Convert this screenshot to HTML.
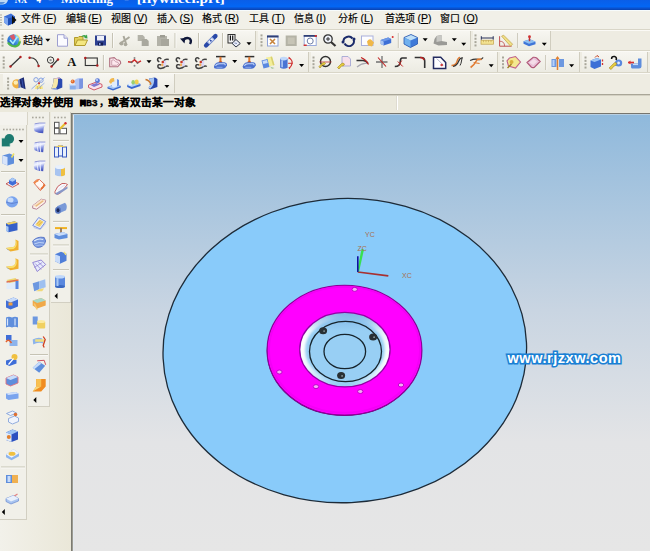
<!DOCTYPE html>
<html lang="zh-CN"><head><meta charset="utf-8"><style>
html,body{margin:0;padding:0;}
body{width:650px;height:551px;overflow:hidden;position:relative;background:#ece9d8;font-family:"Liberation Sans",sans-serif;}
</style></head><body>
<div style="position:absolute;left:0px;top:0px;width:650px;height:10px;background:linear-gradient(#0a5ee8 0%,#0366f4 65%,#0a50cc 85%,#0842b0 100%)"></div>
<div style="position:absolute;left:0px;top:10px;width:650px;height:1px;background:#f6fbfc"></div>
<svg style="position:absolute;left:0;top:0" width="650" height="10"><path d="M0,0 H8 Q7,4 3,4.5 L0,4.5Z" fill="#bcd8f4"/><path d="M0,2 H5 Q4,4 2,4 L0,4Z" fill="#5a90d8"/><text x="14.8" y="3.2" font-family="Liberation Serif" font-weight="bold" font-size="12.5" fill="#fff" textLength="12.2" lengthAdjust="spacingAndGlyphs">NX</text><text x="36.5" y="3.2" font-family="Liberation Serif" font-weight="bold" font-size="12.5" fill="#fff" textLength="4.5" lengthAdjust="spacingAndGlyphs">4</text><text x="48" y="3.2" font-family="Liberation Serif" font-weight="bold" font-size="12.5" fill="#fff" textLength="5" lengthAdjust="spacingAndGlyphs">-</text><text x="61" y="3.2" font-family="Liberation Serif" font-weight="bold" font-size="12.5" fill="#fff" textLength="52" lengthAdjust="spacingAndGlyphs">Modeling</text><text x="124" y="3.2" font-family="Liberation Serif" font-weight="bold" font-size="12.5" fill="#fff" textLength="5" lengthAdjust="spacingAndGlyphs">-</text><text x="136.8" y="3.2" font-family="Liberation Serif" font-weight="bold" font-size="12.5" fill="#fff" textLength="88" lengthAdjust="spacingAndGlyphs">[flywheel.prt]</text></svg>
<div style="position:absolute;left:0px;top:11px;width:650px;height:18px;background:#f1f0e8"></div>
<div style="position:absolute;left:0px;top:29px;width:650px;height:1px;background:#d9d6c8"></div>
<div style="position:absolute;left:0px;top:30px;width:650px;height:1px;background:#fbfaf6"></div>
<div style="position:absolute;left:20.5px;top:13px;white-space:nowrap;font:10px 'Liberation Sans',sans-serif;color:#000;line-height:11px;-webkit-text-stroke:0.15px #000">文件<span style="font-size:10.5px;margin-left:2.5px;letter-spacing:0px">(<u>F</u>)</span></div>
<div style="position:absolute;left:65.5px;top:13px;white-space:nowrap;font:10px 'Liberation Sans',sans-serif;color:#000;line-height:11px;-webkit-text-stroke:0.15px #000">编辑<span style="font-size:10.5px;margin-left:2.5px;letter-spacing:0px">(<u>E</u>)</span></div>
<div style="position:absolute;left:111px;top:13px;white-space:nowrap;font:10px 'Liberation Sans',sans-serif;color:#000;line-height:11px;-webkit-text-stroke:0.15px #000">视图<span style="font-size:10.5px;margin-left:2.5px;letter-spacing:0px">(<u>V</u>)</span></div>
<div style="position:absolute;left:157px;top:13px;white-space:nowrap;font:10px 'Liberation Sans',sans-serif;color:#000;line-height:11px;-webkit-text-stroke:0.15px #000">插入<span style="font-size:10.5px;margin-left:2.5px;letter-spacing:0px">(<u>S</u>)</span></div>
<div style="position:absolute;left:202px;top:13px;white-space:nowrap;font:10px 'Liberation Sans',sans-serif;color:#000;line-height:11px;-webkit-text-stroke:0.15px #000">格式<span style="font-size:10.5px;margin-left:2.5px;letter-spacing:0px">(<u>R</u>)</span></div>
<div style="position:absolute;left:249px;top:13px;white-space:nowrap;font:10px 'Liberation Sans',sans-serif;color:#000;line-height:11px;-webkit-text-stroke:0.15px #000">工具<span style="font-size:10.5px;margin-left:2.5px;letter-spacing:0px">(<u>T</u>)</span></div>
<div style="position:absolute;left:293.6px;top:13px;white-space:nowrap;font:10px 'Liberation Sans',sans-serif;color:#000;line-height:11px;-webkit-text-stroke:0.15px #000">信息<span style="font-size:10.5px;margin-left:2.5px;letter-spacing:0px">(<u>I</u>)</span></div>
<div style="position:absolute;left:338px;top:13px;white-space:nowrap;font:10px 'Liberation Sans',sans-serif;color:#000;line-height:11px;-webkit-text-stroke:0.15px #000">分析<span style="font-size:10.5px;margin-left:2.5px;letter-spacing:0px">(<u>L</u>)</span></div>
<div style="position:absolute;left:385px;top:13px;white-space:nowrap;font:10px 'Liberation Sans',sans-serif;color:#000;line-height:11px;-webkit-text-stroke:0.15px #000">首选项<span style="font-size:10.5px;margin-left:2.5px;letter-spacing:0px">(<u>P</u>)</span></div>
<div style="position:absolute;left:440.4px;top:13px;white-space:nowrap;font:10px 'Liberation Sans',sans-serif;color:#000;line-height:11px;-webkit-text-stroke:0.15px #000">窗口<span style="font-size:10.5px;margin-left:2.5px;letter-spacing:0px">(<u>O</u>)</span></div>
<div style="position:absolute;left:0px;top:31px;width:650px;height:19px;background:#eeece2"></div>
<div style="position:absolute;left:0px;top:50px;width:650px;height:1px;background:#d9d6c8"></div>
<div style="position:absolute;left:0px;top:51px;width:650px;height:1px;background:#fbfaf6"></div>
<div style="position:absolute;left:0px;top:52px;width:650px;height:20px;background:#eeece2"></div>
<div style="position:absolute;left:0px;top:72px;width:650px;height:1px;background:#d9d6c8"></div>
<div style="position:absolute;left:0px;top:73px;width:650px;height:1px;background:#fbfaf6"></div>
<div style="position:absolute;left:0px;top:74px;width:650px;height:20px;background:#eeece2"></div>
<div style="position:absolute;left:0px;top:94px;width:650px;height:1px;background:#a9a698"></div>
<div style="position:absolute;left:0px;top:95px;width:650px;height:1px;background:#d4d1c3"></div>
<div style="position:absolute;left:0px;top:31px;width:256px;height:19px;background:linear-gradient(#f7f6f1,#ecebe2);border-right:1px solid #d0cdbf;box-sizing:border-box"></div>
<div style="position:absolute;left:258px;top:31px;width:213px;height:19px;background:linear-gradient(#f7f6f1,#ecebe2);border-right:1px solid #d0cdbf;box-sizing:border-box"></div>
<div style="position:absolute;left:473px;top:31px;width:78px;height:19px;background:linear-gradient(#f7f6f1,#ecebe2);border-right:1px solid #d0cdbf;box-sizing:border-box"></div>
<div style="position:absolute;left:0px;top:52px;width:309px;height:20px;background:linear-gradient(#f7f6f1,#ecebe2);border-right:1px solid #d0cdbf;box-sizing:border-box"></div>
<div style="position:absolute;left:311px;top:52px;width:187px;height:20px;background:linear-gradient(#f7f6f1,#ecebe2);border-right:1px solid #d0cdbf;box-sizing:border-box"></div>
<div style="position:absolute;left:500px;top:52px;width:80px;height:20px;background:linear-gradient(#f7f6f1,#ecebe2);border-right:1px solid #d0cdbf;box-sizing:border-box"></div>
<div style="position:absolute;left:582px;top:52px;width:66px;height:20px;background:linear-gradient(#f7f6f1,#ecebe2);border-right:1px solid #d0cdbf;box-sizing:border-box"></div>
<div style="position:absolute;left:3px;top:74px;width:172px;height:19px;background:linear-gradient(#f7f6f1,#ecebe2);border-right:1px solid #d0cdbf;box-sizing:border-box"></div>
<div style="position:absolute;left:0px;top:96px;width:650px;height:17px;background:#ebe9dc"></div>
<div style="position:absolute;left:397px;top:96px;width:1px;height:14px;background:#ffffff"></div>
<div style="position:absolute;left:396px;top:96px;width:1px;height:14px;background:#dedbd0"></div>
<div style="position:absolute;left:0px;top:97px;white-space:nowrap;font:bold 10.4px 'Liberation Sans',sans-serif;color:#000;line-height:11px;letter-spacing:0.55px;-webkit-text-stroke:0.2px #000">选择对象并使用</div>
<div style="position:absolute;left:80px;top:97.5px;white-space:nowrap;font:bold 9.8px 'Liberation Mono',monospace;color:#000;line-height:11px;-webkit-text-stroke:0.35px #000"><span style='-webkit-text-stroke:1.2px #000'>M</span>B3</div>
<div style="position:absolute;left:98.5px;top:97px;white-space:nowrap;font:bold 10.4px 'Liberation Sans',sans-serif;color:#000;line-height:11px">，</div>
<div style="position:absolute;left:107.5px;top:97px;white-space:nowrap;font:bold 10.7px 'Liberation Sans',sans-serif;color:#000;line-height:11px;-webkit-text-stroke:0.2px #000">或者双击某一对象</div>
<div style="position:absolute;left:0px;top:112px;width:72px;height:439px;background:linear-gradient(90deg,#f2f1ea,#eae7d8)"></div>
<div style="position:absolute;left:0px;top:112px;width:28px;height:13px;background:#f4f3ee;border-right:1px solid #d8d5c8;box-sizing:border-box"></div>
<div style="position:absolute;left:0px;top:125px;width:27px;height:395px;background:#f1f0e9;border-right:1px solid #d2cfc2;border-bottom:1px solid #d2cfc2;box-sizing:border-box"></div>
<div style="position:absolute;left:28px;top:112px;width:22px;height:295px;background:#f1f0e9;border-right:1px solid #d2cfc2;border-bottom:1px solid #d2cfc2;box-sizing:border-box"></div>
<div style="position:absolute;left:51px;top:112px;width:20px;height:191px;background:#f1f0e9;border-right:1px solid #d2cfc2;border-bottom:1px solid #d2cfc2;box-sizing:border-box"></div>
<div style="position:absolute;left:71px;top:113px;width:1px;height:438px;background:#7c7b72"></div>
<div style="position:absolute;left:72px;top:113px;width:1px;height:438px;background:#9c9b92"></div>
<div style="position:absolute;left:73px;top:114px;width:1px;height:437px;background:#e4e9ee"></div>
<div style="position:absolute;left:74px;top:114px;width:576px;height:437px;background:linear-gradient(#8fb9dc 0%,#c9d5e2 45%,#e3e4e6 75%,#e6e6e6 100%)"></div>
<div style="position:absolute;left:71px;top:113px;width:579px;height:1px;background:#76756e"></div>
<div style="position:absolute;left:73px;top:114px;width:577px;height:1px;background:#b8cfe2"></div>
<svg style="position:absolute;left:0;top:0" width="650" height="551" viewBox="0 0 650 551"><defs><linearGradient id="shg" x1="0" y1="0" x2="0.3" y2="1"><stop offset="0" stop-color="#c4ccf6"/><stop offset="0.4" stop-color="#f2f4ff"/><stop offset="0.7" stop-color="#8a98e4"/><stop offset="1" stop-color="#4858c0"/></linearGradient></defs><defs><radialGradient id="hole" cx="0.5" cy="0.45" r="0.55"><stop offset="0" stop-color="#f2f9fd"/><stop offset="0.6" stop-color="#d4ecf8"/><stop offset="1" stop-color="#9fd0f2"/></radialGradient></defs><ellipse cx="344.8" cy="350.6" rx="181.85" ry="152.1" transform="rotate(-2.5 344.8 350.6)" fill="#89cbfa" stroke="#1d2b38" stroke-width="1.3"/><ellipse cx="344.3" cy="351.1" rx="77.6" ry="65" fill="#6a0078"/><ellipse cx="344.5" cy="350.2" rx="77.4" ry="64.9" fill="#ff00ff" stroke="#8a0098" stroke-width="1.2"/><ellipse cx="344.5" cy="349.8" rx="75.5" ry="63" fill="none" stroke="#f400f6" stroke-width="2"/><defs><clipPath id="hc"><ellipse cx="344.9" cy="349.6" rx="45.2" ry="37.2"/></clipPath><linearGradient id="sheen" x1="0" y1="0.45" x2="1" y2="0.55"><stop offset="0" stop-color="#ffffff" stop-opacity="1"/><stop offset="0.25" stop-color="#e8f6fc" stop-opacity="0.55"/><stop offset="0.45" stop-color="#c0e2f8" stop-opacity="0.05"/><stop offset="0.6" stop-color="#c0e2f8" stop-opacity="0.05"/><stop offset="0.8" stop-color="#e8f6fc" stop-opacity="0.6"/><stop offset="1" stop-color="#ffffff" stop-opacity="0.95"/></linearGradient><linearGradient id="topdark" x1="0" y1="0" x2="0" y2="1"><stop offset="0" stop-color="#6a9ed8" stop-opacity="0.55"/><stop offset="0.25" stop-color="#6a9ed8" stop-opacity="0"/></linearGradient><filter id="bl" x="-10%" y="-10%" width="120%" height="120%"><feGaussianBlur stdDeviation="1.3"/></filter></defs><ellipse cx="344.9" cy="349.6" rx="45.2" ry="37.2" fill="#98cff4"/><g clip-path="url(#hc)"><ellipse cx="344.9" cy="350" rx="43" ry="35" fill="none" stroke="url(#sheen)" stroke-width="6.5" filter="url(#bl)"/><rect x="299" y="312" width="92" height="76" fill="url(#topdark)"/></g><ellipse cx="344.9" cy="349.6" rx="45.2" ry="37.2" fill="none" stroke="#9400a4" stroke-width="1.3"/><ellipse cx="345.5" cy="351.5" rx="36" ry="30.2" fill="none" stroke="#16242c" stroke-width="1.3"/><ellipse cx="344.8" cy="351.5" rx="20.8" ry="17.2" fill="none" stroke="#16242c" stroke-width="1.3"/><ellipse cx="323.1" cy="330.8" rx="4" ry="3.5" fill="#283034"/><circle cx="324.1" cy="331.1" r="0.9" fill="#8a9aa0"/><ellipse cx="373.1" cy="336.9" rx="4" ry="3.5" fill="#283034"/><circle cx="374.1" cy="337.2" r="0.9" fill="#8a9aa0"/><ellipse cx="341.1" cy="375.6" rx="4" ry="3.5" fill="#283034"/><circle cx="342.1" cy="375.90000000000003" r="0.9" fill="#8a9aa0"/><ellipse cx="354.7" cy="289.4" rx="2.7" ry="2" fill="#f6a8f6" stroke="#b800c4" stroke-width="0.9"/><ellipse cx="279.4" cy="372" rx="2.7" ry="2" fill="#f6a8f6" stroke="#b800c4" stroke-width="0.9"/><ellipse cx="316" cy="386.6" rx="2.7" ry="2" fill="#f6a8f6" stroke="#b800c4" stroke-width="0.9"/><ellipse cx="360.3" cy="391.5" rx="2.7" ry="2" fill="#f6a8f6" stroke="#b800c4" stroke-width="0.9"/><ellipse cx="401" cy="385" rx="2.7" ry="2" fill="#f6a8f6" stroke="#b800c4" stroke-width="0.9"/><path d="M357.8,272 L388.3,275.9" stroke="#a83030" stroke-width="1.7"/><path d="M357,272 L361.5,249 L364,249.5 L359,272Z" fill="#38e050"/><path d="M357.8,272 L357.8,256.2" stroke="#1010a0" stroke-width="1.6"/><text x="365" y="237" font-family="Liberation Sans" font-size="7" fill="#a87050">YC</text><text x="357.5" y="250.5" font-family="Liberation Sans" font-size="7" fill="#a87050">ZC</text><text x="402" y="277.8" font-family="Liberation Sans" font-size="7" fill="#a87050">XC</text><path d="M0,15 h2 M0,17.5 h2 M0,20 h2 M0,22.5 h2 M0,25 h2" stroke="#b0ad9f" stroke-width="1"/><g transform="translate(3,13.5) scale(1)"><path d="M1,3 L8,0 L12,3 L12,9 L5,12 L1,9 Z" fill="#3b6fd8"/>
<path d="M1,3 L5,5 L5,12 L1,9Z" fill="#7aa4ee"/><path d="M5,5 L12,3 L12,9 L5,12Z" fill="#1d4fb8"/>
<path d="M9,2 L13.5,6.5 L9,11 Z" fill="#111"/></g><rect x="1.5" y="34.6" width="2" height="2" fill="#a8a69a"/><rect x="1.5" y="37.95" width="2" height="2" fill="#a8a69a"/><rect x="1.5" y="41.300000000000004" width="2" height="2" fill="#a8a69a"/><rect x="1.5" y="44.650000000000006" width="2" height="2" fill="#a8a69a"/><g transform="translate(7,33.5) scale(1)"><defs><linearGradient id="glb" x1="0" y1="1" x2="1" y2="0"><stop offset="0" stop-color="#1a48b0"/><stop offset="0.5" stop-color="#3a8ae0"/><stop offset="1" stop-color="#8ad8f4"/></linearGradient></defs>
<circle cx="6.5" cy="7" r="6.2" fill="url(#glb)"/>
<path d="M1,9 Q4,13.5 9,12.8 Q12.5,11.5 13,7.5" fill="none" stroke="#50b848" stroke-width="2.2"/>
<path d="M9.5,1.2 Q13.5,3.5 13,8" fill="none" stroke="#e8e080" stroke-width="1.3"/>
<path d="M2.5,2.5 L7,0.5 L8.5,5.5 L5.5,6.5Z" fill="#d85868"/>
<path d="M3,6.5 L6,10 L10.5,3" fill="none" stroke="#a8ecff" stroke-width="1.6"/></g><path d="M45.3,38.8 h5 l-2.5,3 z" fill="#000"/><g transform="translate(57,34.2) scale(1)"><path d="M0.5,0.5 H7 L10.5,4 V12 H0.5 Z" fill="#fbfbff" stroke="#9d9fd0" stroke-width="1"/>
<path d="M7,0.5 V4 H10.5" fill="#e6e6f6" stroke="#9d9fd0" stroke-width="1"/></g><g transform="translate(74,34) scale(1)"><path d="M0.5,3.5 H4 L5,2.5 H9 V11.5 H0.5 Z" fill="#e3cf5a" stroke="#b19b2e"/>
<path d="M1,11.5 L3.5,6 H13.5 L11,11.5 Z" fill="#f4e780" stroke="#b19b2e"/>
<path d="M7,3 Q9,0 12,1.5 L13,0.5 L13.5,4.5 L10,4 L11,3 Q9,2.2 7,3Z" fill="#3aa34a"/></g><g transform="translate(95,35.5) scale(1)"><rect x="0" y="0" width="11" height="10" fill="#2c3f90"/>
<rect x="2" y="0.5" width="7" height="4.5" fill="#eef0fa"/>
<rect x="3" y="7" width="5" height="3" fill="#101b50"/><rect x="4" y="7.5" width="1.5" height="2" fill="#8fa0e0"/></g><rect x="112.0" y="33" width="1" height="15" fill="#c6c3b4"/><rect x="113.0" y="33" width="1" height="15" fill="#fff" opacity="0.6"/><g transform="translate(118.5,35) scale(1)"><path d="M1,9 L11,2" stroke="#aaa89c" stroke-width="2"/><path d="M5,1 L8,10" stroke="#aaa89c" stroke-width="2"/>
<circle cx="3" cy="8.5" r="2" fill="#aaa89c"/><circle cx="7" cy="9.5" r="1.8" fill="#aaa89c"/></g><g transform="translate(137.7,35) scale(1)"><path d="M0,0 H5 L7,2 V6 H0Z" fill="#b3b2a8"/><path d="M4,4 H9 L11,6 V11 H4Z" fill="#a9a89e"/></g><g transform="translate(157,35) scale(1)"><rect x="0" y="1" width="10" height="10" fill="#b3b2a8"/><rect x="3" y="0" width="5" height="2.5" fill="#9d9c92"/><rect x="4" y="4" width="8" height="7" fill="#a7a69c"/></g><rect x="174.5" y="33" width="1" height="15" fill="#c6c3b4"/><rect x="175.5" y="33" width="1" height="15" fill="#fff" opacity="0.6"/><g transform="translate(180,36) scale(1)"><path d="M3,4 Q6,1 9.5,2.5 Q12,4.5 10,8" fill="none" stroke="#10183a" stroke-width="2.4"/>
<path d="M0,2.5 L4.5,7.5 L5.5,2 Z" fill="#10183a"/></g><rect x="198.0" y="33" width="1" height="15" fill="#c6c3b4"/><rect x="199.0" y="33" width="1" height="15" fill="#fff" opacity="0.6"/><g transform="translate(204,34) scale(1)"><path d="M2,11.5 L11.5,2" stroke="#2848a8" stroke-width="4.2" stroke-linecap="round"/>
<path d="M4.2,9.3 L9.3,4.2" stroke="#b8c8ec" stroke-width="3.6"/>
<path d="M5.2,8.3 L6.3,7.2 M7.3,6.2 L8.3,5.2" stroke="#ffffff" stroke-width="1.6"/>
<circle cx="6.8" cy="6.7" r="0.9" fill="#2848a8"/></g><rect x="222.0" y="33" width="1" height="15" fill="#c6c3b4"/><rect x="223.0" y="33" width="1" height="15" fill="#fff" opacity="0.6"/><g transform="translate(227.5,34) scale(1)"><rect x="0.5" y="0.5" width="7" height="8.5" fill="#f4f4f4" stroke="#303030" stroke-width="1"/>
<rect x="2.3" y="1.5" width="1.2" height="5" fill="#111"/><rect x="4.6" y="1.5" width="1.2" height="5" fill="#111"/>
<path d="M8.5,5.5 L12.8,9.5 L8.5,13 L4.5,9.3 Z" fill="#e8ecf8" stroke="#303848" stroke-width="1"/><path d="M7,9 L9.5,9.5" stroke="#6a7aa8" stroke-width="0.8"/></g><path d="M246.5,42.3 h5 l-2.5,3 z" fill="#000"/><rect x="260.5" y="34.4" width="2" height="2" fill="#a8a69a"/><rect x="260.5" y="37.75" width="2" height="2" fill="#a8a69a"/><rect x="260.5" y="41.1" width="2" height="2" fill="#a8a69a"/><rect x="260.5" y="44.45" width="2" height="2" fill="#a8a69a"/><g transform="translate(267,35.5) scale(1)"><rect x="0.5" y="0.5" width="10.5" height="10" fill="#fff" stroke="#8fa3d8"/>
<rect x="0" y="0" width="11.5" height="2" fill="#2e3f76"/>
<path d="M3,3.5 L8,8.5 M8,3.5 L3,8.5" stroke="#c8843c" stroke-width="1.6"/></g><g transform="translate(285.7,35.5) scale(1)"><rect x="0" y="0" width="11" height="10.5" fill="#b4b3a6"/><rect x="2" y="2" width="7" height="6.5" fill="#c6c4b6"/></g><g transform="translate(303.7,35) scale(1)"><rect x="0.5" y="0.5" width="12" height="10" fill="#fff" stroke="#98aadc"/>
<rect x="0" y="0" width="13" height="1.8" fill="#2e3f76"/>
<circle cx="6.5" cy="6" r="3" fill="none" stroke="#6e7ea8" stroke-width="1"/>
<rect x="0" y="9.5" width="3" height="1.5" fill="#d03030"/><rect x="11" y="0" width="2" height="2" fill="#d03030"/></g><g transform="translate(323,34) scale(1)"><circle cx="5" cy="5" r="4.2" fill="#eef2fa" stroke="#333" stroke-width="1.3"/>
<path d="M3,5 H7 M5,3 V7" stroke="#333" stroke-width="1"/><path d="M8,8 L12.5,12" stroke="#333" stroke-width="2.2"/></g><g transform="translate(341.5,35.5) scale(1)"><path d="M2,6 A5,4.5 0 0 1 11,3" fill="none" stroke="#1a2a6a" stroke-width="2"/>
<path d="M12,4 A5,4.5 0 0 1 3,8" fill="none" stroke="#1a2a6a" stroke-width="2"/>
<circle cx="1.5" cy="6.5" r="1.5" fill="#1a2a6a"/><circle cx="12.5" cy="3.5" r="1.5" fill="#1a2a6a"/></g><g transform="translate(361,35.5) scale(1)"><rect x="0.5" y="0.5" width="11.5" height="9.5" fill="#fdfdff" stroke="#a9b0dc"/>
<path d="M6,6 Q8,3 10,4 L13,7 L11,11 L7,10 Z" fill="#f0b848"/></g><g transform="translate(380.2,36) scale(1)"><path d="M0.5,4 L8,1.5 L11,3 L11,7 L3.5,9.5 L0.5,8 Z" fill="#3d6fd6"/>
<path d="M0.5,4 L3.5,5.5 L3.5,9.5 L0.5,8Z" fill="#a8c4f2"/><path d="M0.5,4 L8,1.5 L11,3 L3.5,5.5Z" fill="#6e98e6"/>
<circle cx="12.5" cy="1" r="1" fill="#d83030"/></g><rect x="397.8" y="33" width="1" height="15" fill="#c6c3b4"/><rect x="398.8" y="33" width="1" height="15" fill="#fff" opacity="0.6"/><g transform="translate(403,34) scale(1)"><path d="M1,3.5 L8,0.5 L14.5,3.5 L14.5,10 L7.5,13.5 L1,10 Z" fill="#3f7ad8"/>
<path d="M1,3.5 L8,0.5 L14.5,3.5 L7.5,6.5Z" fill="#bfe0f8"/><path d="M1,3.5 L7.5,6.5 L7.5,13.5 L1,10Z" fill="#6fb0ee"/>
<path d="M1,3.5 L8,0.5 L14.5,3.5 L14.5,10 L7.5,13.5 L1,10 Z" fill="none" stroke="#2a58b0" stroke-width="0.8"/></g><path d="M422.7,38.3 h5 l-2.5,3 z" fill="#000"/><g transform="translate(433.5,35) scale(1)"><path d="M3,1 L8,0 L8,6 L13.5,7 L13.5,10 L5,10.5 L0,8.5 L1,4 Z" fill="#9a9a96"/>
<path d="M3,1 L8,0 L8,6 L3,7Z" fill="#c8c8c4"/></g><path d="M451.8,38.3 h5 l-2.5,3 z" fill="#000"/><path d="M461.2,42.8 h5 l-2.5,3 z" fill="#000"/><rect x="474.5" y="34.4" width="2" height="2" fill="#a8a69a"/><rect x="474.5" y="37.75" width="2" height="2" fill="#a8a69a"/><rect x="474.5" y="41.1" width="2" height="2" fill="#a8a69a"/><rect x="474.5" y="44.45" width="2" height="2" fill="#a8a69a"/><g transform="translate(480.5,36.2) scale(1)"><rect x="0.5" y="4" width="12.5" height="4" fill="#f4e494" stroke="#c0a048" stroke-width="0.7"/>
<path d="M0.8,0 V3.5 M12.7,0 V3.5 M0.8,1.8 H12.7" stroke="#283058" stroke-width="1"/><path d="M3,4 V6 M5.5,4 V6 M8,4 V6 M10.5,4 V6" stroke="#c0a048" stroke-width="0.6"/></g><g transform="translate(498.6,35.2) scale(1)"><path d="M1,11 V1 M1,11 H13" stroke="#c05050" stroke-width="1"/><path d="M1,6 Q6,6 6,11" fill="none" stroke="#c05050" stroke-width="0.8"/>
<path d="M3,1 L5,0 L14,9 L12,11 Z" fill="#f0e088" stroke="#c0a040" stroke-width="0.7"/></g><rect x="517.2" y="33" width="1" height="15" fill="#c6c3b4"/><rect x="518.2" y="33" width="1" height="15" fill="#fff" opacity="0.6"/><g transform="translate(523,35.2) scale(1)"><path d="M0.5,6 L7,4 L12.5,6.5 L12.5,9 L6,11 L0.5,8.5Z" fill="#3f75d8"/>
<path d="M0.5,6 L7,4 L12.5,6.5 L6,8.5Z" fill="#8fbff0"/>
<path d="M6.5,6 V1.5" stroke="#c03030" stroke-width="1.4"/><circle cx="6.5" cy="1.5" r="1.4" fill="#d03030"/></g><path d="M541.8,42.8 h5 l-2.5,3 z" fill="#000"/><rect x="2.7" y="56.5" width="2" height="2" fill="#a8a69a"/><rect x="2.7" y="59.85" width="2" height="2" fill="#a8a69a"/><rect x="2.7" y="63.2" width="2" height="2" fill="#a8a69a"/><rect x="2.7" y="66.55" width="2" height="2" fill="#a8a69a"/><g transform="translate(9.5,56.5) scale(1)"><path d="M1,10 L11,0.5" stroke="#333" stroke-width="1.2"/><circle cx="1" cy="10" r="1.2" fill="#b02020"/><circle cx="11" cy="0.5" r="1.2" fill="#b02020"/></g><g transform="translate(28.8,57) scale(1)"><path d="M0.5,0.8 Q8,0 9.8,9" fill="none" stroke="#333" stroke-width="1.2"/><circle cx="0.8" cy="0.8" r="1.2" fill="#b02020"/><circle cx="9.8" cy="9" r="1.2" fill="#b02020"/></g><g transform="translate(47,56.5) scale(1)"><circle cx="3.6" cy="3.6" r="3.2" fill="none" stroke="#333" stroke-width="1"/><circle cx="3.6" cy="3.6" r="1.2" fill="#999"/>
<path d="M4.5,10 L11,3" stroke="#333" stroke-width="1.2"/><circle cx="4.5" cy="10" r="1.2" fill="#b02020"/><circle cx="11" cy="3" r="1.2" fill="#b02020"/></g><text x="71.7" y="66" text-anchor="middle" font-family="Liberation Serif" font-weight="bold" font-size="12.5" fill="#111">A</text><g transform="translate(84.5,57) scale(1)"><rect x="0.8" y="1" width="12" height="7.5" fill="none" stroke="#333" stroke-width="1.1"/><circle cx="0.8" cy="1" r="1.2" fill="#b02020"/><circle cx="12.8" cy="8.5" r="1.2" fill="#b02020"/></g><rect x="102.9" y="55" width="1" height="15" fill="#c6c3b4"/><rect x="103.9" y="55" width="1" height="15" fill="#fff" opacity="0.6"/><g transform="translate(108.7,56.8) scale(1)"><path d="M1,1.5 L5.5,0.8 L8,3 Q12,3 12,6.5 L9,10 H1 Z" fill="#fde8ee" stroke="#b07080" stroke-width="1.1"/>
<path d="M3,3.5 L5,3 L7,5 Q10,5 10,7 L8,8.5 H3 Z" fill="none" stroke="#c090a0" stroke-width="0.8"/></g><g transform="translate(127.5,56.8) scale(1)"><path d="M0.5,5 L4,5.5 L7,3 L10,6 L13.5,4" fill="none" stroke="#d02828" stroke-width="1.5"/>
<circle cx="7" cy="1.2" r="1" fill="#888"/><circle cx="7" cy="9" r="1" fill="#888"/><circle cx="4" cy="5.5" r="1" fill="#666"/><circle cx="10" cy="6" r="1" fill="#666"/></g><path d="M146.5,60.3 h5 l-2.5,3 z" fill="#000"/><g transform="translate(156.3,56.5) scale(1)"><path d="M5,2.5 Q3,0.5 1.5,2 Q0.5,4 3,5.5" fill="none" stroke="#404040" stroke-width="1.4"/><path d="M7.5,4.5 Q9,2 12.5,3" fill="none" stroke="#404040" stroke-width="1.4"/>
<path d="M5,8.5 Q2,7.5 1.5,9.5 Q1.5,12 4.5,12 Q8,11.5 9,10 Q11,9 12.5,10" fill="none" stroke="#404040" stroke-width="1.4"/>
<path d="M7,4 L10,4.5 L9.5,10 L6,9.5Z" fill="#dcd8f8"/><circle cx="6.5" cy="5.5" r="1.3" fill="#c83828"/><ellipse cx="6" cy="8.3" rx="1.2" ry="1.6" fill="#f0b060"/></g><g transform="translate(175,56.5) scale(1)"><path d="M5,2.5 Q3,0.5 1.5,2 Q0.5,4 3,5.5" fill="none" stroke="#404040" stroke-width="1.4"/><path d="M7.5,4.5 Q9,2 12.5,3" fill="none" stroke="#404040" stroke-width="1.4"/>
<path d="M5,8.5 Q2,7.5 1.5,9.5 Q1.5,12 4.5,12 Q8,11.5 9,10 Q11,9 12.5,10" fill="none" stroke="#404040" stroke-width="1.4"/>
<path d="M7,4 L10,4.5 L9.5,10 L6,9.5Z" fill="#dcd8f8"/><circle cx="6.5" cy="5.5" r="1.3" fill="#c83828"/><ellipse cx="6" cy="8.3" rx="1.2" ry="1.6" fill="#f0b060"/></g><g transform="translate(194.3,56.5) scale(1)"><path d="M5,2.5 Q3,0.5 1.5,2 Q0.5,4 3,5.5" fill="none" stroke="#404040" stroke-width="1.4"/><path d="M7.5,4.5 Q9,2 12.5,3" fill="none" stroke="#404040" stroke-width="1.4"/>
<path d="M5,8.5 Q2,7.5 1.5,9.5 Q1.5,12 4.5,12 Q8,11.5 9,10 Q11,9 12.5,10" fill="none" stroke="#404040" stroke-width="1.4"/>
<path d="M7,4 L10,4.5 L9.5,10 L6,9.5Z" fill="#dcd8f8"/><circle cx="6.5" cy="5.5" r="1.3" fill="#c83828"/><ellipse cx="6" cy="8.3" rx="1.2" ry="1.6" fill="#f0b060"/></g><g transform="translate(213.5,55.8) scale(1)"><path d="M2.5,0.8 H12" stroke="#303030" stroke-width="1.5"/><path d="M7,1 V6.5" stroke="#e07830" stroke-width="2"/><ellipse cx="7" cy="6.5" rx="2" ry="1" fill="#c05020"/>
<path d="M0.5,10.5 Q2,6.5 5,6.5 H11 Q13.8,7 13.5,9.5 Q12,13 9,13 H3 Q0,13 0.5,10.5Z" fill="#4a70d0"/><path d="M2,10 Q3,8 6,8 H11 Q12,8.5 11.5,9.5" fill="none" stroke="#c8daf8" stroke-width="1.1"/><path d="M3,11.5 H9" stroke="#98b4ec" stroke-width="0.8"/></g><path d="M232.2,60.099999999999994 h5 l-2.5,3 z" fill="#000"/><g transform="translate(242.3,55.8) scale(1)"><path d="M2.5,0.8 H12" stroke="#303030" stroke-width="1.5"/><path d="M7,1 V6.5" stroke="#e07830" stroke-width="2"/><ellipse cx="7" cy="6.5" rx="2" ry="1" fill="#c05020"/>
<path d="M0.5,10.5 Q2,6.5 5,6.5 H11 Q13.8,7 13.5,9.5 Q12,13 9,13 H3 Q0,13 0.5,10.5Z" fill="#4a70d0"/><path d="M2,10 Q3,8 6,8 H11 Q12,8.5 11.5,9.5" fill="none" stroke="#c8daf8" stroke-width="1.1"/><path d="M3,11.5 H9" stroke="#98b4ec" stroke-width="0.8"/></g><g transform="translate(261,56) scale(1)"><path d="M5,1.5 L11,0.5 L13.5,9 L7.5,10.5Z" fill="#f4ee98"/><path d="M11,0.5 L13.5,9 L12,9.5 L9.5,1Z" fill="#d8d070"/><path d="M0.5,4.5 L6.5,3 L8.5,11 L2.5,12.5Z" fill="#5a88e0"/><path d="M1.5,5 L6,4 L6.8,7 L2.3,8Z" fill="#c8dcfa"/><path d="M9,10.5 L13.5,12 L11,13Z" fill="#a8c8a0"/></g><g transform="translate(279.6,55.8) scale(1)"><path d="M0.5,3 Q4,1 8,3 V12 Q4,14 0.5,12Z" fill="#4a74d4"/><ellipse cx="4.2" cy="2.8" rx="3.7" ry="1.8" fill="#c0d8fa"/><path d="M2.5,4.5 V11.5" stroke="#b8d0f8" stroke-width="1.5"/>
<path d="M9.5,2 Q13,4.5 12.5,7.5 Q12,10.5 9.5,12.5" fill="none" stroke="#d03030" stroke-width="1.2"/><path d="M8.5,7.5 H13" stroke="#d03030" stroke-width="1"/><path d="M9,1 L11,2.5 L9,3.5Z M9,11.5 L11,12 L9.5,13.5Z" fill="#d03030"/></g><path d="M299.1,64.0 h5 l-2.5,3 z" fill="#000"/><rect x="312.5" y="56.5" width="2" height="2" fill="#a8a69a"/><rect x="312.5" y="59.85" width="2" height="2" fill="#a8a69a"/><rect x="312.5" y="63.2" width="2" height="2" fill="#a8a69a"/><rect x="312.5" y="66.55" width="2" height="2" fill="#a8a69a"/><g transform="translate(318.5,56) scale(1)"><circle cx="7" cy="5.5" r="5" fill="none" stroke="#303030" stroke-width="1.4"/><path d="M1,6 H13" stroke="#c03030" stroke-width="0.8"/>
<path d="M0.5,10.5 L4,7 Q6,5.5 7,7.5 Q6,9.5 4,9 L1.5,12Z" fill="#e8d040" stroke="#a08020" stroke-width="0.6"/></g><g transform="translate(337,56) scale(1)"><path d="M5,0.5 H11 L13.5,3 V10 H5Z" fill="#f8e0ec" stroke="#9aa0d0" stroke-width="0.8"/>
<path d="M0.5,11.5 L4,8 Q6,6 7.5,8 Q7,10.5 4.5,10 L2,13Z" fill="#e8d040" stroke="#a08020" stroke-width="0.6"/></g><g transform="translate(356,56.5) scale(1)"><path d="M0.5,4 H7 Q10,4 12,7" fill="none" stroke="#333" stroke-width="1.5"/><path d="M5,1 Q10,3 12.5,8" fill="none" stroke="#c02020" stroke-width="1.2"/><path d="M1,10.5 Q6,6 11,7" fill="none" stroke="#a8a8b0" stroke-width="1.2"/></g><g transform="translate(376,56) scale(1)"><path d="M0,6 H11.5 M6,0 V12" stroke="#707070" stroke-width="1.3"/><path d="M2,1.5 L10,10.5" stroke="#c02020" stroke-width="1.1"/></g><g transform="translate(393.8,56.5) scale(1)"><path d="M13,1.5 H8.5 Q6.5,1.5 6.5,5 Q6.5,10 1,10" fill="none" stroke="#333" stroke-width="1.6"/><path d="M4,5 L9,10" stroke="#c02020" stroke-width="1"/><path d="M5,9 L8,4" stroke="#c02020" stroke-width="0.8"/></g><g transform="translate(414.2,56) scale(1)"><path d="M0.5,1.5 H7 Q10.5,1.5 10.5,5 V12" fill="none" stroke="#333" stroke-width="1.6"/><path d="M6,1.5 Q9,1.5 10,4" fill="none" stroke="#c02020" stroke-width="1.4"/></g><g transform="translate(432.7,56.5) scale(1)"><path d="M0.8,0.8 H8 L13,6 V12 H0.8Z" fill="#fff" stroke="#242c60" stroke-width="1.5"/><path d="M4,2 L11,9" stroke="#9ca0c0" stroke-width="0.8"/><circle cx="9" cy="8.5" r="1.3" fill="#d04040"/></g><g transform="translate(451,56.5) scale(1)"><path d="M0.5,9 Q5,9 6,5 Q7,1 9,1" fill="none" stroke="#e07a30" stroke-width="1.4"/><path d="M2,10 Q6,9 7.5,5 Q9,1 12,1.5" fill="none" stroke="#333" stroke-width="1.2"/><path d="M11,2 Q10,8 9,9" fill="none" stroke="#333" stroke-width="1"/></g><g transform="translate(469.6,56.5) scale(1)"><path d="M0.5,4 Q5,2 9,3 Q12,3.5 13.5,1" fill="none" stroke="#333" stroke-width="1.3"/><path d="M1,11 Q5,8 7,4 Q8,2 12,3" fill="none" stroke="#e07a30" stroke-width="1.6"/><path d="M4,6 L10,7" stroke="#e07a30" stroke-width="1.2"/></g><path d="M488.7,64.3 h5 l-2.5,3 z" fill="#000"/><rect x="502.0" y="56.5" width="2" height="2" fill="#a8a69a"/><rect x="502.0" y="59.85" width="2" height="2" fill="#a8a69a"/><rect x="502.0" y="63.2" width="2" height="2" fill="#a8a69a"/><rect x="502.0" y="66.55" width="2" height="2" fill="#a8a69a"/><g transform="translate(506.5,56) scale(1)"><path d="M3,2 L9,0.5 L14,6 L9,12 L2,10 L0.5,5Z" fill="#f4e890" stroke="#c06088" stroke-width="1.1"/><circle cx="5" cy="6" r="2" fill="#d8b040"/><path d="M1,12 L5,8" stroke="#a08020" stroke-width="1.5"/></g><g transform="translate(526.2,56.5) scale(1)"><path d="M0.8,6 L7,0.8 Q9,0.5 10.5,1.5 L14,5 L8,11 Q6,11.5 5,10.5Z" fill="#e8c0d8" stroke="#b05878" stroke-width="1.1"/><path d="M3,6 L7.5,2.5 L11,5 L7,8.5Z" fill="#f4dce8"/></g><rect x="545.2" y="55" width="1" height="15" fill="#c6c3b4"/><rect x="546.2" y="55" width="1" height="15" fill="#fff" opacity="0.6"/><g transform="translate(551,56) scale(1)"><rect x="0.5" y="3" width="5" height="8" fill="#6d98e0"/><rect x="8" y="3" width="5" height="8" fill="#6d98e0"/><rect x="1.5" y="4" width="2" height="6" fill="#b8d0f8"/>
<path d="M6.5,14 V1" stroke="#e08030" stroke-width="1.5"/><path d="M4.5,3 L6.5,0 L8.5,3Z" fill="#e08030"/></g><path d="M569.1,64.3 h5 l-2.5,3 z" fill="#000"/><rect x="584.5" y="56.5" width="2" height="2" fill="#a8a69a"/><rect x="584.5" y="59.85" width="2" height="2" fill="#a8a69a"/><rect x="584.5" y="63.2" width="2" height="2" fill="#a8a69a"/><rect x="584.5" y="66.55" width="2" height="2" fill="#a8a69a"/><g transform="translate(590,55.5) scale(1)"><path d="M0.5,5 L7,2.5 L11,4 L11,11 L4.5,13.5 L0.5,11.5Z" fill="#3d70d6"/><path d="M0.5,5 L7,2.5 L11,4 L4.5,6.5Z" fill="#9ec6f4"/>
<path d="M5,2 L7,0 L9,1.5" stroke="#c04020" stroke-width="1" fill="none"/><path d="M12.5,4 V10" stroke="#d03030" stroke-width="1.3" stroke-dasharray="2,1.5"/></g><g transform="translate(608.6,56) scale(1)"><circle cx="10" cy="7" r="3.6" fill="#5a88de"/><circle cx="10" cy="7" r="1.4" fill="#e0ecff"/>
<path d="M3,3 Q3,0 6,0.5 Q8.5,1.2 7.5,4" fill="none" stroke="#111" stroke-width="1.6"/>
<path d="M0.5,12 L4.5,8 Q6,5.5 8,7 Q8,10 5.5,10 L2.5,13.5Z" fill="#e8d040" stroke="#a08020" stroke-width="0.6"/></g><g transform="translate(628,56.5) scale(1)"><path d="M3,7 H10 V2 H13.5 V10 Q13.5,12 11,12 H4 Q3,12 3,10Z" fill="#5f8ddc"/><path d="M5,8 H10" stroke="#c8dcfa" stroke-width="1.2"/>
<path d="M0,6 H6" stroke="#d83030" stroke-width="1.6"/><path d="M0,6 L2.5,4 V8Z" fill="#d83030"/></g><rect x="7.1" y="77.5" width="2" height="2" fill="#a8a69a"/><rect x="7.1" y="80.85" width="2" height="2" fill="#a8a69a"/><rect x="7.1" y="84.2" width="2" height="2" fill="#a8a69a"/><rect x="7.1" y="87.55" width="2" height="2" fill="#a8a69a"/><g transform="translate(11.8,76.8) scale(1)"><circle cx="5" cy="7" r="4.6" fill="#f0b040"/><circle cx="4" cy="5.8" r="2.2" fill="#fcecb0"/>
<path d="M7.5,2.5 Q10,1.5 12,0.5 L13.8,12.5 L9,10.5 Q8,6 7.5,2.5Z" fill="#1c2a70"/><path d="M7.5,2.5 L9,10.5 L6.5,11.5 Q7,6 6,4Z" fill="#6a88d8"/><path d="M10,2 L11.5,11" stroke="#4060c0" stroke-width="0.8"/></g><g transform="translate(31,77) scale(1)"><path d="M0.5,12 L13.5,0.5" stroke="#8aa8e8" stroke-width="0.9"/><circle cx="5" cy="2.8" r="2.2" fill="none" stroke="#7a98e0" stroke-width="0.9"/><circle cx="10" cy="3.2" r="2.2" fill="none" stroke="#7a98e0" stroke-width="0.9"/>
<path d="M4,12 L5,7.5 L6.5,9 L8,6 L9.5,9 L11,7.5 L12,12Z" fill="#f4e486"/><path d="M6.5,9 V12 M9.5,9 V12" stroke="#d8b850" stroke-width="0.7"/><circle cx="8" cy="6.2" r="1" fill="#c83030"/><path d="M6,12.5 L13.5,6" stroke="#8aa8e8" stroke-width="0.8"/></g><g transform="translate(50.5,77) scale(1)"><path d="M3,1.5 L9,0.5 L11.8,2.5 L11.8,10.5 L7,12.5 L0.5,12 Q3,8 3,1.5Z" fill="#2848b0"/>
<path d="M3,1.5 L7.5,1 Q8,8 5.5,11 L0.5,12 Q3,8 3,1.5Z" fill="#f6e8a8"/><path d="M3,1.5 L9,0.5 L10,1.5 L7.5,1.8Z" fill="#e0b0d0"/><path d="M0.5,12 L5.5,11 L7,12.5Z" fill="#98b0e8"/></g><g transform="translate(69.2,77) scale(1)"><path d="M5.5,3 Q9,0 13.8,1.5 V11 Q9,13 5.5,12Z" fill="#b0c4f4"/><path d="M10,2 Q12.5,1.5 13.8,1.5 V11 Q12,12 10,12Z" fill="#7a94e0"/>
<rect x="0.5" y="7" width="6" height="5.5" fill="#8aaeea"/><rect x="0.5" y="7" width="6" height="1.5" fill="#d8e4fa"/><circle cx="3.5" cy="4.5" r="2" fill="#e06830"/><circle cx="3" cy="4" r="0.8" fill="#f8c080"/></g><g transform="translate(88,77.5) scale(1)"><path d="M0.5,7.5 L8.5,4.5 L14,7 L14,9.5 L6,12.5 L0.5,10Z" fill="#f8e4ec" stroke="#d05868" stroke-width="1"/><path d="M2.5,7.5 L8.5,5.5 L12,7 L6,9.5Z" fill="#8078d0"/><circle cx="9.5" cy="3.2" r="2.4" fill="#5a78d8"/><circle cx="9" cy="2.6" r="1" fill="#c8d8fa"/></g><g transform="translate(107,77) scale(1)"><path d="M0.5,10 L8.5,7 L13.8,9 L13.8,10.5 L6,13.5 L0.5,11.5Z" fill="#3a68d0"/><path d="M0.5,10 L8.5,7 L13.8,9 L6,12Z" fill="#a8c8f4"/>
<path d="M5,4 L10,2 L12,3 V8.5 L7,10.5 L5,9.5Z" fill="#e0ecfc"/><path d="M10,2 L12,3 V8.5 L10,9.5Z" fill="#6a90e0"/><path d="M2,5 Q3,0.5 7,1 L7.5,4.5 Q5,4 4,7Z" fill="#f0b850"/></g><g transform="translate(126.7,79.5) scale(1)"><path d="M0.5,5.5 L9,2.5 L13.8,4.5 L13.8,6.5 L5,9.5 L0.5,7.5Z" fill="#3a68d0"/><path d="M0.5,5.5 L9,2.5 L13.8,4.5 L5,7.5Z" fill="#b0d4f4"/><ellipse cx="3.5" cy="4" rx="2" ry="2.2" fill="#e8f0fc"/><ellipse cx="6.5" cy="2.8" rx="1.8" ry="2.3" fill="#9ad070"/><ellipse cx="10" cy="2.5" rx="2" ry="2.4" fill="#f0d050"/></g><g transform="translate(145,77) scale(1)"><path d="M4,1.5 L10,0.5 L12.4,2 L12.4,10 L5,12.5 L3.5,11 Q7,7 4,1.5Z" fill="#2848b0"/><path d="M4,1.5 L9,1 Q10,7 5.5,11.5 L3.5,11 Q7,7 4,1.5Z" fill="#a8c8f4"/><path d="M0.5,2.5 Q4,3 6,7" fill="none" stroke="#c87830" stroke-width="1.6"/><path d="M5,6 L6.5,7.5 L4.5,8Z" fill="#c87830"/></g><path d="M164.4,85.1 h5 l-2.5,3 z" fill="#000"/><rect x="3.0" y="128.7" width="1.6" height="1.6" fill="#a9a79c"/><rect x="6.2" y="128.7" width="1.6" height="1.6" fill="#a9a79c"/><rect x="9.4" y="128.7" width="1.6" height="1.6" fill="#a9a79c"/><rect x="12.600000000000001" y="128.7" width="1.6" height="1.6" fill="#a9a79c"/><rect x="15.8" y="128.7" width="1.6" height="1.6" fill="#a9a79c"/><rect x="19.0" y="128.7" width="1.6" height="1.6" fill="#a9a79c"/><rect x="22.200000000000003" y="128.7" width="1.6" height="1.6" fill="#a9a79c"/><g transform="translate(1.3,133.4) scale(1)"><circle cx="8" cy="5.5" r="4.8" fill="#1d7a70"/><rect x="0.5" y="5" width="8" height="8" fill="#1d7a70"/><path d="M0.5,5 H3 M8.5,10 V13" stroke="#5ab0a0" stroke-width="0.6"/></g><path d="M18.5,140.10000000000002 h5 l-2.5,3 z" fill="#000"/><g transform="translate(1.5,152.5) scale(1)"><path d="M1,3 L8,1 L12.5,3 V11 L6,13 L1,11Z" fill="#5f8edc"/><path d="M1,3 L6,4.5 V13 L1,11Z" fill="#d8e4fa"/><path d="M12.5,1 L10,5" stroke="#f0e060" stroke-width="1.5"/></g><path d="M18.5,159.10000000000002 h5 l-2.5,3 z" fill="#000"/><rect x="1" y="171.0" width="24" height="1" fill="#c6c3b4"/><rect x="1" y="172.0" width="24" height="1" fill="#fff" opacity="0.6"/><g transform="translate(5.5,176.8) scale(1)"><path d="M0.5,7 L6.5,4 L13.5,7 L7,10.5Z" fill="#f6f0f0" stroke="#c05050" stroke-width="0.9"/><path d="M3.5,3.5 L7,1 L10.5,3 V7 L7,9 L3.5,7Z" fill="#3f6ed8"/><path d="M3.5,3.5 L7,1 L10.5,3 L7,5Z" fill="#a8c8f4"/></g><g transform="translate(5.5,196.1) scale(1)"><ellipse cx="6.5" cy="5.8" rx="6" ry="5.6" fill="#7aa4ee"/><ellipse cx="5" cy="4" rx="3" ry="2.5" fill="#c8dcfa"/><path d="M0.5,6 Q6.5,9 12.5,6" fill="none" stroke="#5a7ac8" stroke-width="0.7"/></g><rect x="1" y="214.0" width="24" height="1" fill="#c6c3b4"/><rect x="1" y="215.0" width="24" height="1" fill="#fff" opacity="0.6"/><g transform="translate(5.5,220.2) scale(1)"><path d="M0.5,3 L9,1 L12,2.5 V10 L3,12 L0.5,10.5Z" fill="#3560c8"/><path d="M0.5,3 L9,1 L12,2.5 L3,4.5Z" fill="#f0d060"/><path d="M0.5,5.5 L3,6.5 V12 L0.5,10.5Z" fill="#a8c8f4"/></g><g transform="translate(5.5,239.0) scale(1)"><path d="M0.5,9 L8,8 Q11,6 10,0.5 L13,2 V11 L5,12.5 Z" fill="#f0b030"/><path d="M0.5,9 L8,8 Q11,6 10,0.5 L11,2 Q12,8 8,10 L2,10.5Z" fill="#f8e070"/><path d="M0.5,9 L5,12.5 L2,10.5Z" fill="#3560c8"/></g><g transform="translate(5.5,257.8) scale(1)"><path d="M0.5,9 L8,8 Q11,6 10,0.5 L13,2 V11 L5,12.5 Z" fill="#f0b030"/><path d="M0.5,9 L8,8 Q11,6 10,0.5 L11,2 Q12,8 8,10 L2,10.5Z" fill="#f8e070"/><path d="M0.5,9 L5,12.5 L2,10.5Z" fill="#3560c8"/></g><g transform="translate(5.5,277.0) scale(1)"><path d="M1,3 L10,1 L13,4 V12 H1Z" fill="#e0ecfa"/><path d="M1,3 L10,1 L13,4 L4,6Z" fill="#f0d870"/><path d="M1,5 L13,3" stroke="#e07050" stroke-width="1.5"/><rect x="10" y="4" width="3" height="8" fill="#5a88de"/></g><g transform="translate(5.5,296.5) scale(1)"><path d="M0.5,4 L8,1 L12.5,3 V10 L5,13 L0.5,11Z" fill="#3f6ed8"/><path d="M0.5,4 L8,1 L12.5,3 L5,6Z" fill="#c8dcfa"/><rect x="3" y="6" width="4" height="3" fill="#f0a040"/></g><g transform="translate(5.5,315.5) scale(1)"><path d="M0.5,2 Q3.5,0.5 6.5,2 V12 Q3.5,10.5 0.5,12Z" fill="#5f8edc"/><path d="M6.5,2 Q9.5,0.5 12.5,2 V12 Q9.5,10.5 6.5,12Z" fill="#5f8edc"/><path d="M2,3 V10 M9.5,3 V10" stroke="#d8e4fa" stroke-width="1.2"/></g><g transform="translate(5.5,334.0) scale(1)"><path d="M0.5,1 H6 V6 H0.5Z" fill="#3f6ed8"/><path d="M4,6 H12 V12 H4Z" fill="#8db4ec"/><path d="M0.5,8 Q3,4 6,9" fill="none" stroke="#e06030" stroke-width="1.5"/></g><g transform="translate(5.5,353.5) scale(1)"><path d="M0.5,7 L8,5 L11,6.5 V10 L4,12.5 L0.5,11Z" fill="#3f6ed8"/><circle cx="9" cy="3.5" r="3" fill="#f0c040"/><path d="M3,11 L8,5" stroke="#fff" stroke-width="1.2"/></g><g transform="translate(5.5,373.0) scale(1)"><path d="M0.5,5 L8,2 L12.5,4 V10 L5,13 L0.5,11Z" fill="#5f8edc" stroke="#e07080" stroke-width="0.9"/><path d="M0.5,5 L8,2 L12.5,4 L5,7Z" fill="#c8dcfa"/></g><g transform="translate(5.5,391.5) scale(1)"><path d="M0.5,2 L10,0.5 L13,2 V7 L3,8.5 L0.5,7Z" fill="#7aa4ee"/><path d="M0.5,2 L10,0.5 L13,2 L3,3.5Z" fill="#d0e0fa"/></g><g transform="translate(5.5,410.5) scale(1)"><path d="M1,3 L7,0.5 L11,2.5 L5,5Z" fill="#f0f4fc" stroke="#7a9ad8" stroke-width="0.8"/><path d="M3,8 L9,5.5 L13,7.5 V11 L7,13.5 L3,11.5Z" fill="#f0f4fc" stroke="#7a9ad8" stroke-width="0.8"/><circle cx="10" cy="4" r="1.8" fill="#e07030"/></g><g transform="translate(5.5,428.5) scale(1)"><path d="M0.5,4 L7,1 L12.5,3 V11 L6,13.5 L0.5,11.5Z" fill="#2b50c0"/><path d="M0.5,4 L7,1 L12.5,3 L6,6Z" fill="#9cc4f4"/><path d="M0.5,4 L6,6 V13.5 L0.5,11.5Z" fill="#e0ecfa"/><circle cx="3.3" cy="8.5" r="2" fill="#e08030"/></g><g transform="translate(5.5,448.2) scale(1)"><path d="M0.5,6 L8,1 L13.5,5 V8 L6,12 L0.5,9Z" fill="#8db4ec"/><path d="M0.5,6 L8,1 L13.5,5 L6,9.5Z" fill="#f0f4fc"/><ellipse cx="6.5" cy="5.5" rx="3.5" ry="2" fill="#f0c040"/></g><rect x="1" y="466.5" width="24" height="1" fill="#c6c3b4"/><rect x="1" y="467.5" width="24" height="1" fill="#fff" opacity="0.6"/><g transform="translate(5.5,474) scale(1)"><rect x="0.5" y="1" width="6" height="8" fill="#5f8edc"/><rect x="6.5" y="1" width="6" height="8" fill="#f0b050"/><rect x="2" y="2" width="3" height="6" fill="#c8dcfa"/></g><g transform="translate(5.5,493.5) scale(1)"><path d="M0.5,5 L8,2 L13,5 V7.5 L5.5,10.5 L0.5,8Z" fill="#a8c4f0" stroke="#6a8ad0" stroke-width="0.7"/><path d="M5,5 L12,0.5" stroke="#e08080" stroke-width="1.2"/><path d="M0.5,5 L8,2 L13,5 L5.5,8Z" fill="#e8f0fc"/></g><path d="M4.8,509 v6 l-3,-3 z" fill="#000"/><rect x="32.0" y="116.7" width="1.6" height="1.6" fill="#a9a79c"/><rect x="35.4" y="116.7" width="1.6" height="1.6" fill="#a9a79c"/><rect x="38.8" y="116.7" width="1.6" height="1.6" fill="#a9a79c"/><rect x="42.2" y="116.7" width="1.6" height="1.6" fill="#a9a79c"/><g transform="translate(32.2,121.80000000000001) scale(1)"><path d="M2.5,2 Q7,0.8 13.2,1.2 Q11,6 11,11.5 Q6,11.5 2.5,9.5 Q0.5,5.5 2.5,2Z" fill="url(#shg)"/><path d="M2.5,2 Q7,0.8 13.2,1.2" fill="none" stroke="#8088d0" stroke-width="0.8"/></g><g transform="translate(32.2,140.8) scale(1)"><path d="M2.5,2 Q7,0.8 13.2,1.2 Q11,6 11,11.5 Q6,11.5 2.5,9.5 Q0.5,5.5 2.5,2Z" fill="url(#shg)"/><path d="M5.5,1.8 Q4.5,6 6,10.8 M8.5,1.4 Q7.5,6 8.5,11.3" fill="none" stroke="#f0f4ff" stroke-width="0.9"/><path d="M2.5,2 Q7,0.8 13.2,1.2" fill="none" stroke="#8088d0" stroke-width="0.8"/></g><g transform="translate(32.2,159.8) scale(1)"><path d="M2.5,2 Q7,0.8 13.2,1.2 Q11,6 11,11.5 Q6,11.5 2.5,9.5 Q0.5,5.5 2.5,2Z" fill="url(#shg)"/><path d="M5.5,1.8 Q4.5,6 6,10.8 M8.5,1.4 Q7.5,6 8.5,11.3" fill="none" stroke="#f0f4ff" stroke-width="0.9"/><path d="M2.5,2 Q7,0.8 13.2,1.2" fill="none" stroke="#8088d0" stroke-width="0.8"/></g><g transform="translate(32.2,178.5) scale(1)"><path d="M1.5,4 Q4,1 7,0.8 L13,6.5 Q11,10 8,12 Z" fill="#fff8f4" stroke="#d86850" stroke-width="0.9"/><path d="M1.5,4 Q4,1 7,0.8 L6,3 Q3.5,3.5 2.5,6Z" fill="#f08848"/><path d="M13,6.5 Q11,10 8,12 L8.5,9.5 Q11,8 11.5,5Z" fill="#e87030"/><path d="M3,6 L9,11" stroke="#e8b0a0" stroke-width="0.7"/></g><g transform="translate(32.2,197.7) scale(1)"><path d="M0.5,8 L9,1.5 L13.5,2.5 L13,5 L4.5,11.5 L0.5,10.5Z" fill="#fcf0e8" stroke="#b07890" stroke-width="0.9"/><path d="M0.5,8 L9,1.5 L13.5,2.5 L4.5,9Z" fill="#f8e0c8"/><path d="M3.5,8.5 L11,3" stroke="#e8b878" stroke-width="1.2"/></g><g transform="translate(32.2,216.5) scale(1)"><path d="M0.5,9 L6.5,1 L13.5,5 L8,12.5Z" fill="#e8ecfc" stroke="#6a84d8" stroke-width="0.9"/><path d="M3,8.5 L7.5,3 L11.5,5.5 L7.5,10.5Z" fill="#f4d870"/><path d="M4.5,7.5 L8,4 M6,9 L10,5" stroke="#e0a040" stroke-width="0.8"/><path d="M1.5,11 L8,13 L13.5,7" fill="none" stroke="#a8b8e8" stroke-width="0.8"/></g><g transform="translate(32.2,235.0) scale(1)"><path d="M0.5,6 Q5,1 12,2.5 L13.5,6 Q12,12 6,12.5 Q1,12 0.5,6Z" fill="#7a9ae0" stroke="#4a68c0" stroke-width="0.8"/><path d="M2,6 Q6,3 11,4.5" fill="none" stroke="#e0ecfc" stroke-width="1.2"/><path d="M2,9 Q7,6.5 12,8" fill="none" stroke="#c0d4f8" stroke-width="1"/><path d="M3,11 Q8,9.5 12,10.5" fill="none" stroke="#a8c0f0" stroke-width="0.8"/></g><g transform="translate(32.2,259.5) scale(1)"><path d="M0.5,3 L9,0.5 L13.5,5 L5,12 Z" fill="#e8ecfc" stroke="#8a7ad0" stroke-width="0.9"/><path d="M3,4 L9,10 M6,2.5 L11.5,7.5 M2,8 L10,3" stroke="#8a7ad0" stroke-width="0.7"/></g><g transform="translate(32.2,278.2) scale(1)"><path d="M0.5,5 L7,3 V11 L2,13Z" fill="#6d98e0"/><path d="M7,3 L13,1 L13.5,9 L7,11Z" fill="#9ec0f0"/><path d="M7,11 L12,10 L10,13 L4,13Z" fill="#f0d878"/></g><g transform="translate(32.2,297.5) scale(1)"><path d="M0.5,3 L9,0.5 L13.5,3 V8 L5,11 L0.5,8Z" fill="#f0a848"/><path d="M0.5,3 L9,0.5 L13.5,3 L5,5.5Z" fill="#a8d8c8"/><path d="M2,6 L5,12" stroke="#f6c870" stroke-width="1.5"/></g><g transform="translate(32.2,316.5) scale(1)"><rect x="0.5" y="0" width="5" height="8" fill="#6d98e0"/><rect x="5" y="5" width="8" height="7" rx="1" fill="#f0d060"/><ellipse cx="9" cy="5" rx="4" ry="1.5" fill="#fbeaa0"/></g><g transform="translate(32.2,335.5) scale(1)"><path d="M0.5,4 Q6,1 10,3 L11,8 Q6,6 1,9Z" fill="#8db4ec"/><path d="M3,5 H12" stroke="#f0e080" stroke-width="2.5"/><path d="M11,1 L13,4 L11,10 L12,12" stroke="#d04020" stroke-width="1.3" fill="none"/></g><g transform="translate(32.2,359.8) scale(1)"><path d="M0.5,8 L7,2 L13,6 L7,13Z" fill="#5f8edc"/><path d="M0.5,8 L7,2 L9,4 L2,9.5Z" fill="#c8dcfa"/><path d="M5,1 L12,0.5 L13.5,5" stroke="#d05060" stroke-width="1" fill="none"/></g><g transform="translate(32.2,378.5) scale(1)"><path d="M4,0.5 H13.5 V8 L9,13 H0.5 L4,8Z" fill="#f08c20"/><path d="M4,0.5 H9 V8 L4,8Z" fill="#f8c050"/><path d="M0.5,13 L4,8 H9Z" fill="#f8d878"/></g><rect x="30" y="253.5" width="18" height="1" fill="#c6c3b4"/><rect x="30" y="254.5" width="18" height="1" fill="#fff" opacity="0.6"/><rect x="30" y="354.0" width="18" height="1" fill="#c6c3b4"/><rect x="30" y="355.0" width="18" height="1" fill="#fff" opacity="0.6"/><path d="M36.3,397 v6 l-3,-3 z" fill="#000"/><rect x="54.0" y="116.7" width="1.6" height="1.6" fill="#a9a79c"/><rect x="57.4" y="116.7" width="1.6" height="1.6" fill="#a9a79c"/><rect x="60.8" y="116.7" width="1.6" height="1.6" fill="#a9a79c"/><rect x="64.2" y="116.7" width="1.6" height="1.6" fill="#a9a79c"/><g transform="translate(54,121.80000000000001) scale(1)"><rect x="0.5" y="0.5" width="4.5" height="5.5" fill="#fff" stroke="#555" stroke-width="1"/><rect x="0.5" y="6.5" width="4.5" height="5.5" fill="#fff" stroke="#555" stroke-width="1"/><rect x="6" y="6.5" width="6.5" height="5.5" fill="#fff" stroke="#555" stroke-width="1"/><path d="M6,7 L11,2" stroke="#e8c030" stroke-width="2"/><circle cx="11.5" cy="1.5" r="1.2" fill="#d03030"/></g><g transform="translate(54,145.0) scale(1)"><rect x="0.5" y="2" width="4" height="10" fill="#e8f0fc" stroke="#3858c0"/><rect x="4.5" y="1" width="4" height="10" fill="#e8f0fc" stroke="#3858c0"/><rect x="8.5" y="2" width="4" height="10" fill="#e8f0fc" stroke="#3858c0"/><path d="M0.5,2 L6,0 L12.5,2" fill="#f0d060"/></g><g transform="translate(54,164.0) scale(1)"><path d="M1,3 Q6,0 11,3 V11 Q6,13.5 1,11Z" fill="#a8c4f0"/><path d="M7,3 Q9,2 11,3 V11 Q9,12.5 7,12Z" fill="#f0c040"/><ellipse cx="6" cy="3" rx="5" ry="2" fill="#e8f0fc"/></g><g transform="translate(54,182.5) scale(1)"><path d="M1,9 Q3,3 8,1 Q12,0.5 13.5,2 Q10,6 7,10 Q4,13 1,11Z" fill="#f8f8fc" stroke="#c05050" stroke-width="0.9"/><path d="M1,11 Q6,8 13.5,4 L13.5,6 Q8,10 3,12.5Z" fill="#8898c8"/><path d="M4,8 Q7,4 11,2.5" fill="none" stroke="#d8d8e8" stroke-width="0.8"/></g><g transform="translate(54,202.2) scale(1)"><path d="M3,4 L11,0.5 Q14,3 12,8 L4,11.5Z" fill="#7a9ad8"/><ellipse cx="4" cy="8" rx="3" ry="3.5" fill="#5a78c0"/><ellipse cx="4" cy="8" rx="1.5" ry="2" fill="#1a2858"/></g><g transform="translate(54,226.1) scale(1)"><path d="M1,2 H13" stroke="#f0b020" stroke-width="2"/><path d="M7,2 V8" stroke="#a08060" stroke-width="2"/><path d="M0.5,8 L9,6 L13.5,8 V12 L5,13.5 L0.5,12Z" fill="#5f8edc"/><path d="M0.5,8 L9,6 L13.5,8 L5,10Z" fill="#c8dcfa"/></g><g transform="translate(54,250.8) scale(1)"><path d="M1,3.5 L7,1 L12.5,3 V10 L6,13 L1,10.5Z" fill="#4f7ed8"/><path d="M1,3.5 L6,5.5 V13 L1,10.5Z" fill="#c8dcfa"/><path d="M10,1 L12,4" stroke="#f0e080" stroke-width="1.5"/></g><g transform="translate(54,274.5) scale(1)"><rect x="1" y="2" width="10" height="10" fill="#5a88de"/><ellipse cx="6" cy="2.2" rx="5" ry="1.8" fill="#c0d8fa"/><ellipse cx="6" cy="12" rx="5" ry="1.6" fill="#3a68c0"/><rect x="2.5" y="3.5" width="2" height="8" fill="#a8c8f4"/></g><rect x="53" y="139.9" width="16" height="1" fill="#c6c3b4"/><rect x="53" y="140.9" width="16" height="1" fill="#fff" opacity="0.6"/><rect x="53" y="220.9" width="16" height="1" fill="#c6c3b4"/><rect x="53" y="221.9" width="16" height="1" fill="#fff" opacity="0.6"/><rect x="53" y="244.5" width="16" height="1" fill="#c6c3b4"/><rect x="53" y="245.5" width="16" height="1" fill="#fff" opacity="0.6"/><rect x="53" y="269.1" width="16" height="1" fill="#c6c3b4"/><rect x="53" y="270.1" width="16" height="1" fill="#fff" opacity="0.6"/><path d="M57.5,293 v6 l-3,-3 z" fill="#000"/></svg>
<div style="position:absolute;left:22.8px;top:34.5px;white-space:nowrap;font:10px 'Liberation Sans',sans-serif;color:#000;line-height:11px;-webkit-text-stroke:0.15px #000">起始</div>
<div style="position:absolute;left:507.5px;top:350px;white-space:nowrap;font:bold 14.5px 'Liberation Sans',sans-serif;color:#fff;letter-spacing:0.55px;-webkit-text-stroke:3.2px #1a80d4;paint-order:stroke fill">www.rjzxw.com</div>
</body></html>
